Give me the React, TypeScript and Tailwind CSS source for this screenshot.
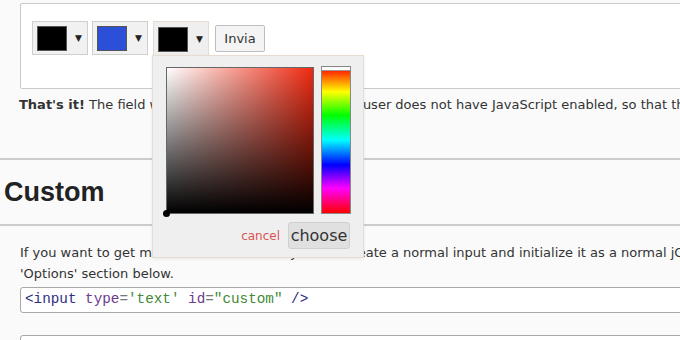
import React from 'react';

const Picker: React.FC<{ color: string; open?: boolean }> = ({ color, open }) => (
  <div
    className={
      'w-[56px] h-[34px] flex items-center gap-[8px] pl-[4px] border border-[#cfcfcf] ' +
      (open ? 'bg-[#efefef] border-b-0 h-[35px] border-[#e6dccf]' : 'bg-[#f1f1f1]')
    }
  >
    <div className="w-[30px] h-[25px] border border-[#555]" style={{ backgroundColor: color }} />
    <span className="text-[9px] text-[#222] leading-none">▼</span>
  </div>
);

const ColorPopup: React.FC = () => (
  <div className="absolute left-[152px] top-[55px] w-[212px] h-[203px] bg-[#efefef] border border-[#e6dccf] shadow-[0_1px_3px_rgba(0,0,0,0.08)] pt-[11px] pl-[13px] pr-[12px]">
    <div className="flex gap-[7px]">
      <div className="relative w-[148px] h-[147px] border border-[#666] bg-[linear-gradient(to_top,#000,transparent),linear-gradient(to_right,#fff,#ef2a12)]">
        <div className="absolute -left-[4px] -bottom-[4px] w-[7px] h-[7px] rounded-full bg-black" />
      </div>
      <div className="relative w-[30px] h-[148px] -mt-[1px] border border-[#888] bg-[linear-gradient(to_bottom,#ff0000,#ffff00_17%,#00ff00_33%,#00ffff_50%,#0000ff_67%,#ff00ff_83%,#ff0000)]">
        <div className="absolute left-0 right-0 top-0 h-[4px] bg-white border-b border-[#999]" />
      </div>
    </div>
    <div className="flex items-center justify-end gap-[8px] mt-[8px] pr-[1px]">
      <span className="text-[12px] text-[#d9534f] font-['DejaVu_Sans',sans-serif]">cancel</span>
      <button className="w-[62px] h-[27px] bg-[#e0e0e0] border border-[#d0d0d0] rounded-[3px] text-[16px] text-[#333] font-['DejaVu_Sans',sans-serif] leading-none">
        choose
      </button>
    </div>
  </div>
);

export default function App() {
  return (
    <div className="relative w-[680px] h-[340px] overflow-hidden bg-[#fafafa] text-[#333] font-['DejaVu_Sans',sans-serif]">
      <div className="pt-[3px]">
        <div className="ml-[20px] w-[700px] h-[86px] bg-white border border-[#c9c9c9] rounded-[2px] pl-[11px] pt-[17px]">
          <div className="flex items-start">
            <Picker color="#000000" />
            <div className="ml-[4px]">
              <Picker color="#2b4fd8" />
            </div>
            <div className="ml-[5px]">
              <Picker color="#000000" open />
            </div>
            <button className="ml-[6px] mt-[4px] w-[50px] h-[27px] bg-[#f4f4f4] border border-[#bdbdbd] rounded-[2px] text-[13px] text-[#333] leading-none">
              Invia
            </button>
          </div>
        </div>
      </div>

      <p className="ml-[19px] mt-[6px] text-[13px] leading-[20px] whitespace-nowrap">
        <b>That's it!</b> The field will be a simple select box if the user does not have JavaScript enabled, so that the
        plugin degrades gracefully.
      </p>

      <div className="mt-[43px] h-[2px] bg-[#cccccc]" />
      <h2 className="h-[64px] flex items-center pl-[4px] text-[27px] font-bold text-[#222] font-['Liberation_Sans',sans-serif]">
        Custom
      </h2>
      <div className="h-[2px] bg-[#cccccc]" />

      <div className="pl-[20px] pt-[16px] text-[13px] leading-[21px]">
        <p className="whitespace-nowrap">
          If you want to get more control of the UI, you can create a normal input and initialize it as a normal jQuery plugin. See the
        </p>
        <p>'Options' section below.</p>
      </div>

      <div className="ml-[20px] mt-[3px] w-[700px] h-[26px] bg-white border border-[#a8a8a8] rounded-[3px] flex items-center pl-[4px] font-['Liberation_Mono',monospace] text-[14.3px] whitespace-nowrap">
        <span className="text-[#2e2e80]">&lt;input</span>
        <span>&nbsp;</span>
        <span className="text-[#6b3b8c]">type</span>
        <span className="text-[#777]">=</span>
        <span className="text-[#3f8a35]">'text'</span>
        <span>&nbsp;</span>
        <span className="text-[#6b3b8c]">id</span>
        <span className="text-[#777]">=</span>
        <span className="text-[#3f8a35]">"custom"</span>
        <span>&nbsp;</span>
        <span className="text-[#2e2e80]">/&gt;</span>
      </div>

      <div className="ml-[20px] mt-[22px] w-[700px] h-[30px] bg-white border border-[#a8a8a8] rounded-[3px]" />

      <ColorPopup />
    </div>
  );
}
